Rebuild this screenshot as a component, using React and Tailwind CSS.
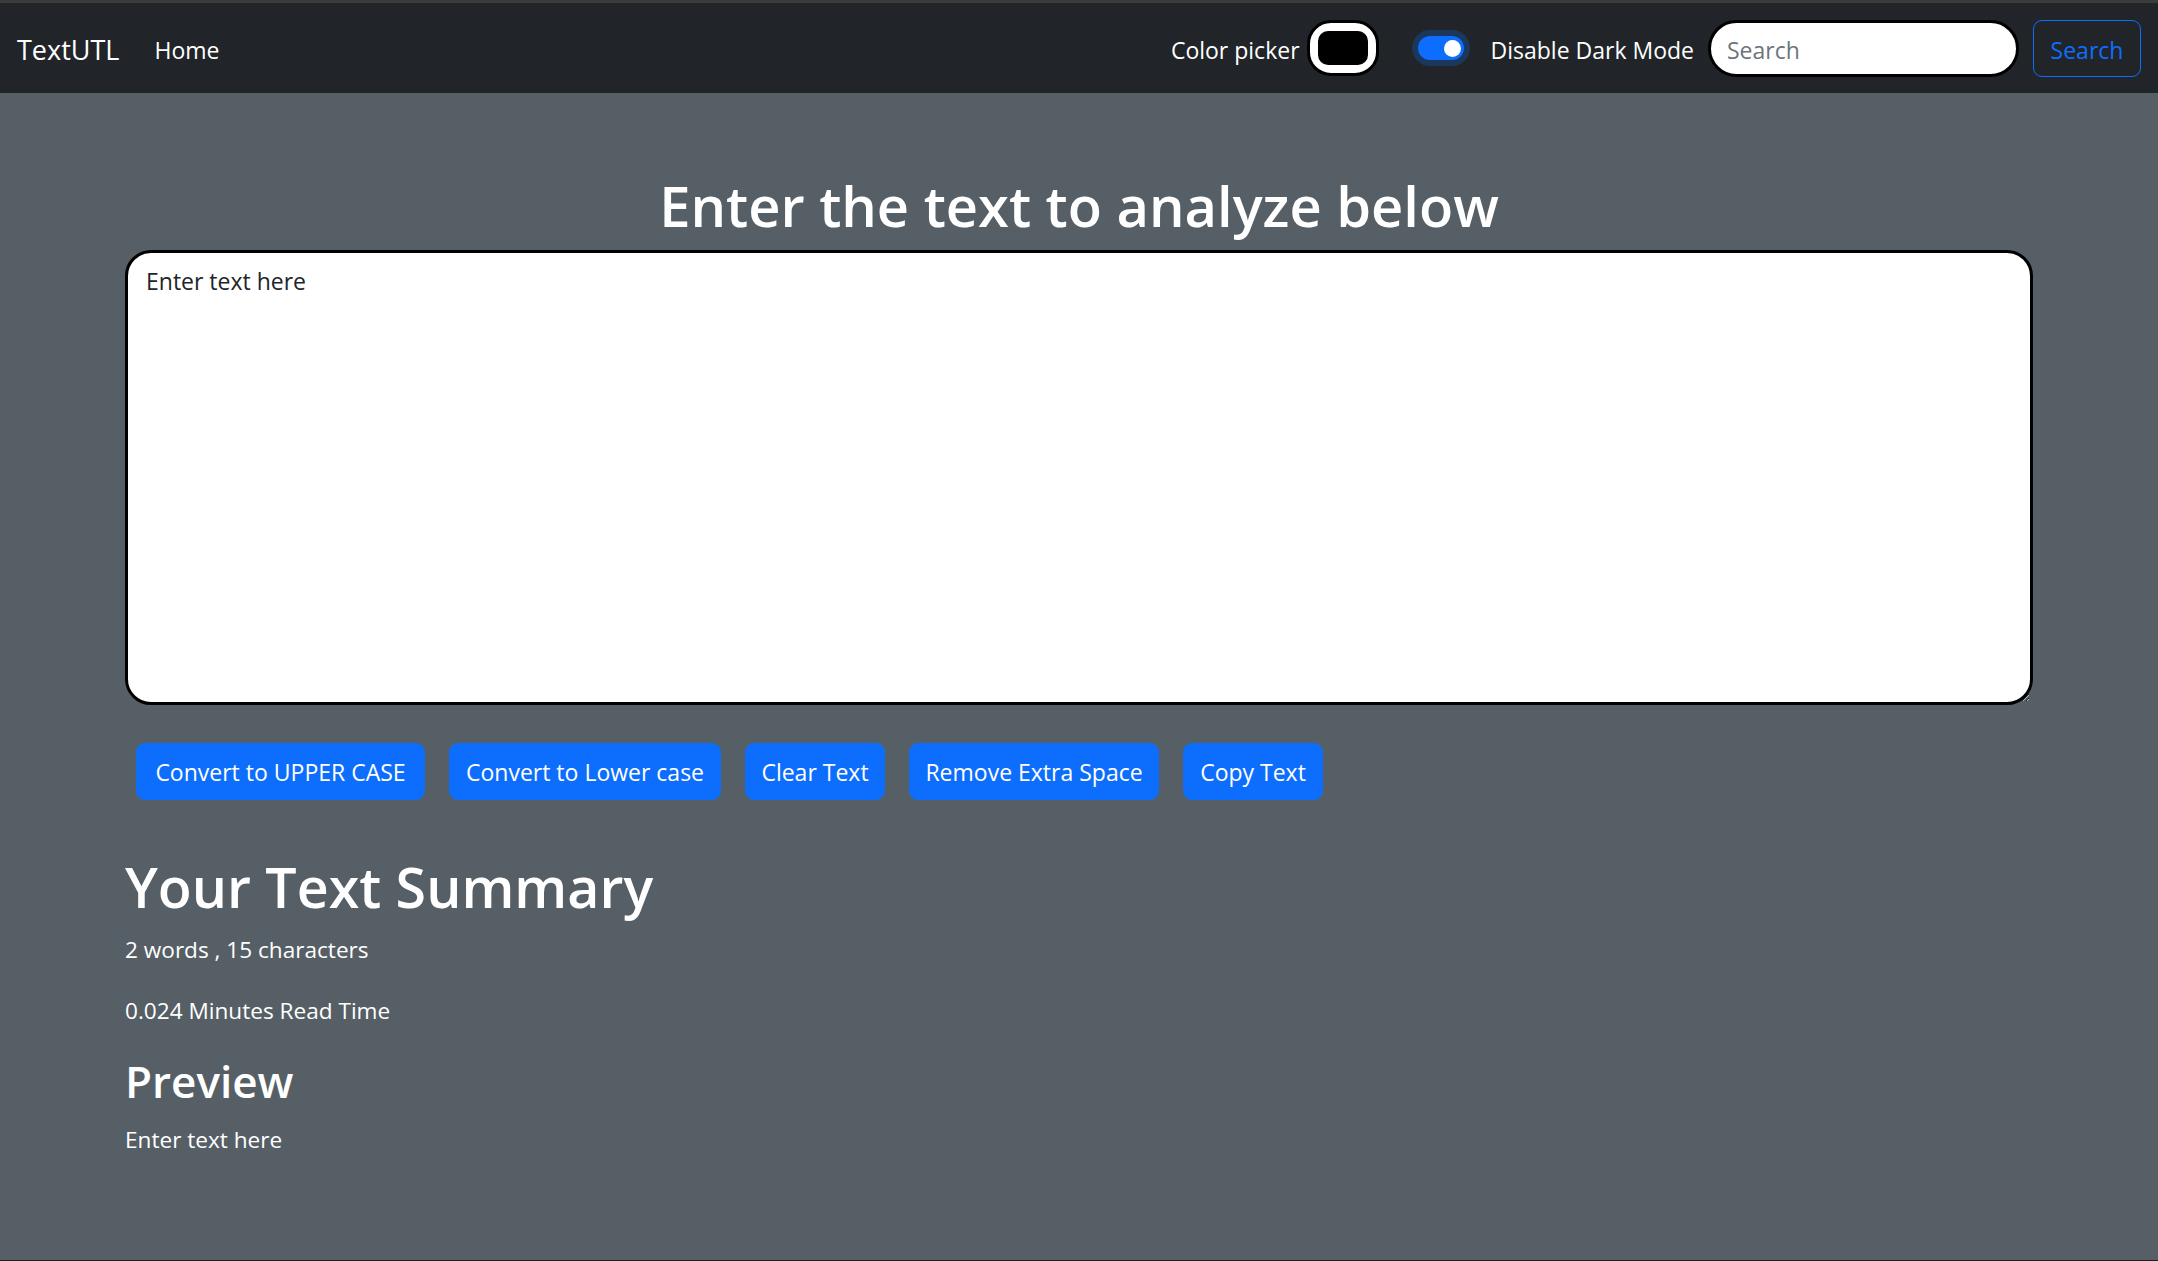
import React from "react";

export default function App() {
  const btn =
    "h-[57px] rounded-[9px] bg-[#0d6efd] border border-[#0d6efd] text-white text-[23px] leading-[36px] whitespace-nowrap text-center";
  const txt = "text-white text-[22.6px] leading-[36px]";
  return (
    <div className="w-full h-[1261px] flex flex-col bg-[#565f66] font-['Open_Sans',sans-serif] overflow-hidden">
      <div className="h-[3px] bg-[#3c3c3c]" />
      <nav className="h-[90px] bg-[#212529] flex items-center px-[17px]">
        <span className="translate-y-[2px] text-white text-[27px] leading-[40px]">TextUTL</span>
        <span className="translate-y-[2px] ml-[35px] text-white text-[23px] leading-[36px]">Home</span>
        <div className="ml-auto flex items-center">
          <span className="translate-y-[2px] text-white text-[23px] leading-[36px]">Color picker</span>
          <div className="ml-[7px] w-[72px] h-[56px] rounded-[24px] border-[3px] border-black bg-white p-[8px]">
            <div className="w-full h-full bg-black rounded-[10px]" />
          </div>
          <div className="ml-[39px] w-[46px] h-[24px] rounded-full bg-[#0d6efd] shadow-[0_0_0_6px_rgba(13,110,253,0.25)] flex items-center justify-end pr-[3px]">
            <div className="w-[17px] h-[17px] rounded-full bg-white" />
          </div>
          <span className="translate-y-[2px] ml-[27px] text-white text-[23px] leading-[36px]">Disable Dark Mode</span>
          <input
            className="ml-[14px] w-[311px] h-[57px] rounded-full border-[3px] border-black bg-white px-[16px] pt-[3px] text-[23px] text-[#212529] placeholder:text-[#6c757d] outline-none"
            placeholder="Search"
          />
          <button className="ml-[14px] w-[108px] h-[57px] pt-[3px] rounded-[9px] border-[1.5px] border-[#0d6efd] text-[#0d6efd] text-[23px] leading-[36px]">
            Search
          </button>
        </div>
      </nav>
      <main className="flex-1 px-[125px]">
        <h1 className="mt-[76px] mb-[9px] text-center text-white text-[56px] leading-[72px] font-semibold">
          Enter the text to analyze below
        </h1>
        <textarea
          className="block w-full h-[455px] border-[3px] border-black rounded-[26px] bg-white px-[18px] pt-[10px] pb-[9px] text-[23px] leading-[36px] text-[#212529] outline-none"
          defaultValue="Enter text here"
        />
        <div className="mt-[38px] pl-[11px] flex gap-[24px]">
          <button className={`${btn} w-[289px]`}>Convert to UPPER CASE</button>
          <button className={`${btn} w-[272px]`}>Convert to Lower case</button>
          <button className={`${btn} w-[140px]`}>Clear Text</button>
          <button className={`${btn} w-[250px]`}>Remove Extra Space</button>
          <button className={`${btn} w-[140px]`}>Copy Text</button>
        </div>
        <h1 className="mt-[51px] mb-[9px] text-white text-[55.5px] leading-[72px] font-semibold">
          Your Text Summary
        </h1>
        <p className={txt}>2 words , 15 characters</p>
        <p className={`mt-[25px] ${txt}`}>0.024 Minutes Read Time</p>
        <h2 className="mt-[23px] text-white text-[44px] leading-[58px] font-semibold">Preview</h2>
        <p className={`mt-[12px] ${txt}`}>Enter text here</p>
      </main>
      <div className="h-px bg-[#1e1e1e]" />
    </div>
  );
}
